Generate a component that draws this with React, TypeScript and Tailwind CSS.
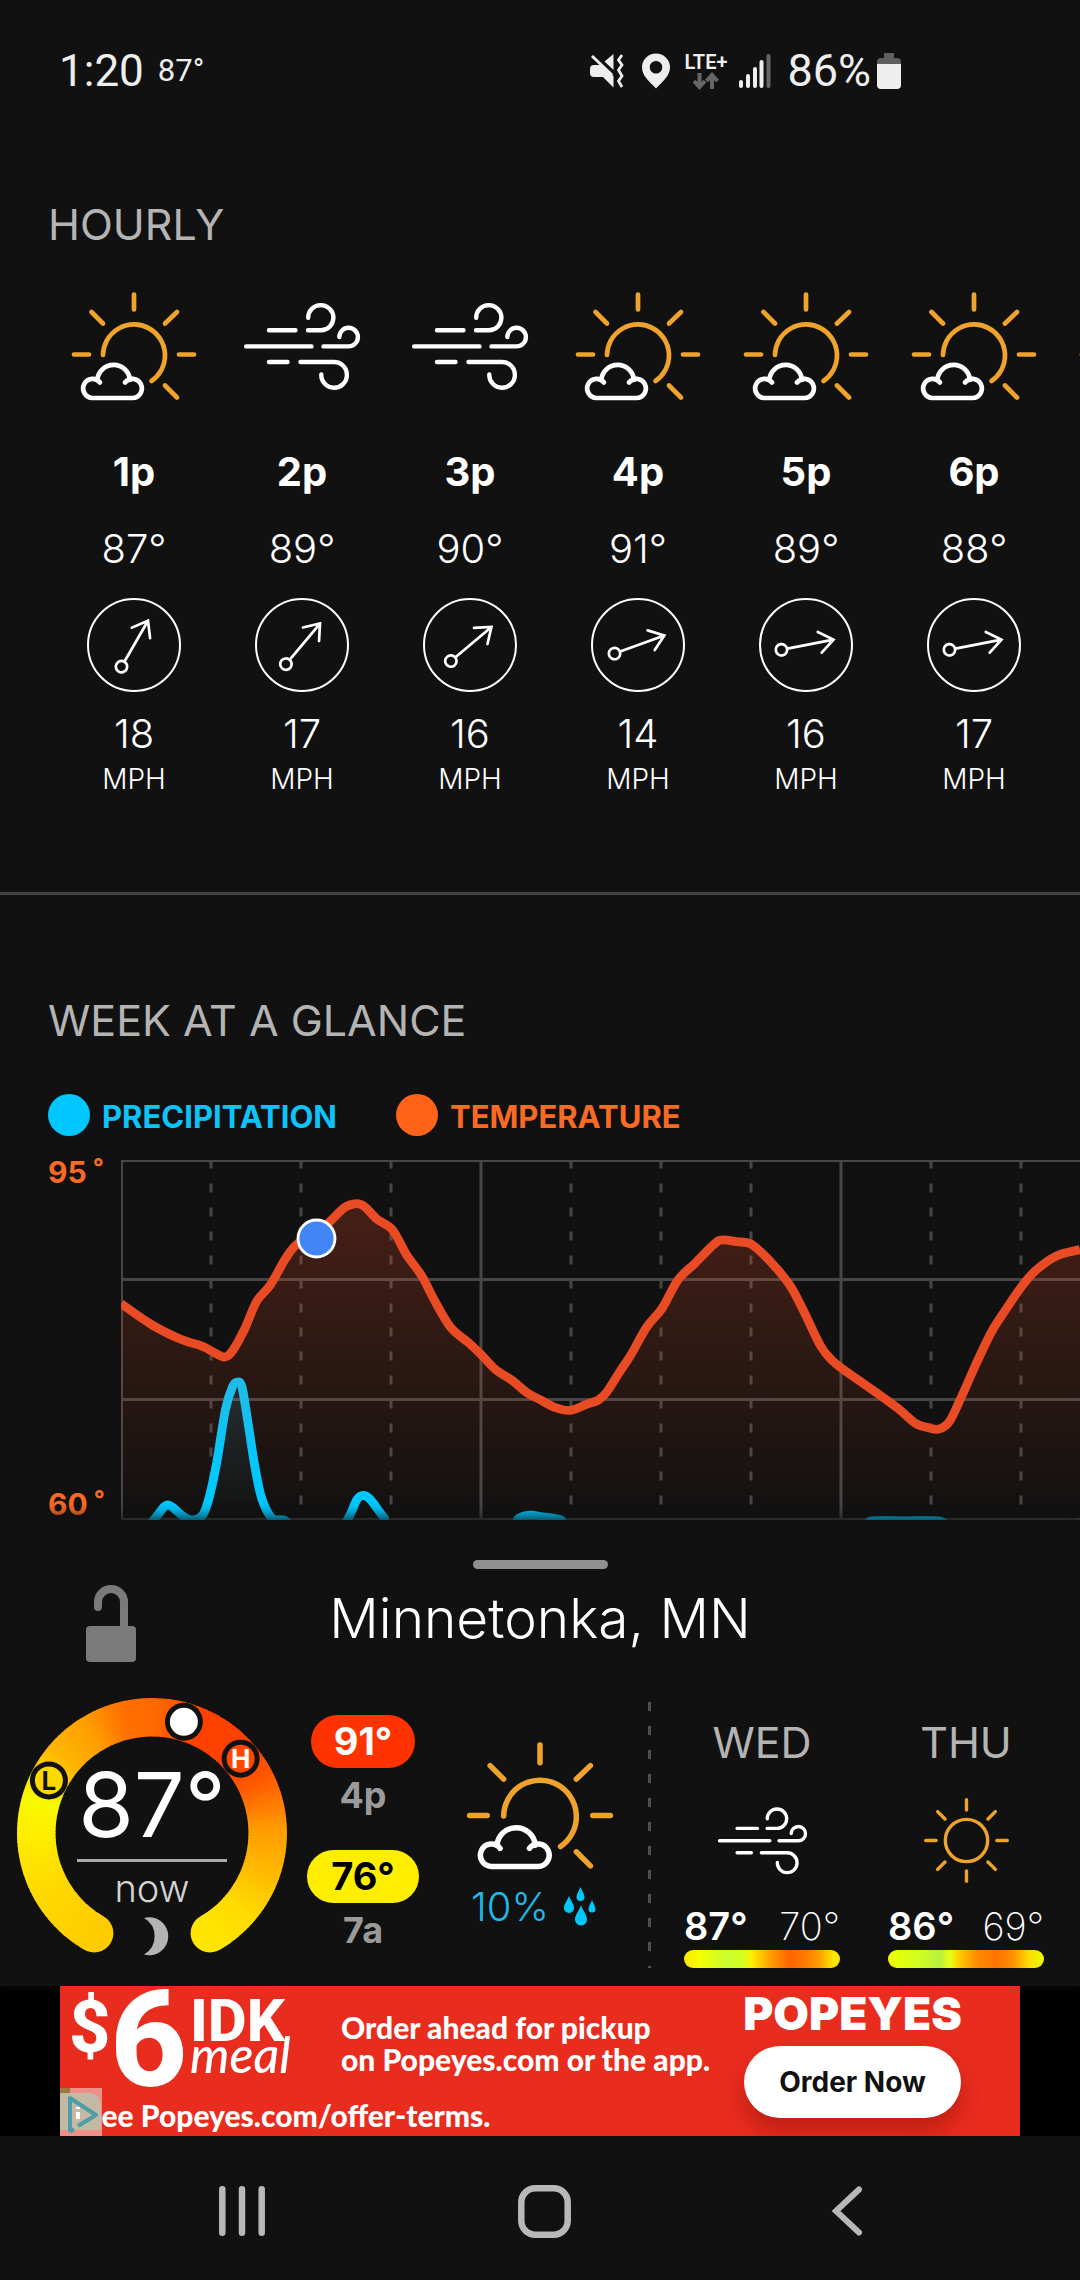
import { ReactNode } from "react";

type Point = [number, number];

interface Hour {
  icon: "sun" | "wind";
  label: string;
  temp: number;
  wind: number;
  angle: number;
}

const hours: Hour[] = [
  { icon: "sun", label: "1p", temp: 87, wind: 18, angle: 60 },
  { icon: "wind", label: "2p", temp: 89, wind: 17, angle: 50 },
  { icon: "wind", label: "3p", temp: 90, wind: 16, angle: 40 },
  { icon: "sun", label: "4p", temp: 91, wind: 14, angle: 20 },
  { icon: "sun", label: "5p", temp: 89, wind: 16, angle: 11 },
  { icon: "sun", label: "6p", temp: 88, wind: 17, angle: 11 },
];

const temperature: Point[] = [
  [0, 143.6], [30.5, 164.6], [59.8, 179.3], [80.4, 185.9], [89.7, 190.6], [102.8, 197],
  [111.4, 191], [123.5, 169.3], [135.5, 141.6], [149.3, 125], [164.8, 98.2], [175.8, 84.3],
  [195, 73.2], [207.9, 62.5], [223.4, 47.6], [235.4, 43.6], [244, 46.9], [256, 59.2],
  [271.6, 70], [285.3, 94.3], [300.8, 116], [312.9, 139.3], [329.4, 167], [347.3, 182.6],
  [359.7, 194.2], [374.9, 209.9], [390.4, 219.9], [405.9, 232.6], [419, 239.7], [434.5, 247.6],
  [449.3, 250.3], [465.5, 244.3], [477.5, 240], [486.1, 231.6], [498.2, 212.6], [510.3, 194.2],
  [525.7, 167], [541.2, 148.3], [556.7, 120.3], [574, 103.3], [592.9, 84.3], [601.5, 79.9],
  [615.3, 81.6], [629, 83.6], [639.4, 91.6], [654.9, 107.6], [670.4, 127.6], [684.2, 154.3],
  [699.6, 185.9], [710, 199.3], [722, 209.3], [749.6, 228.6], [777.1, 248.6], [794.3, 263.3],
  [808.1, 267.9], [818.5, 268.9], [828.8, 261], [840.8, 236], [854.6, 205], [870.1, 172.6],
  [883.9, 150.9], [901.1, 125.9], [914.9, 110.2], [935.5, 95.9], [959, 89.6],
];

const precipitation: Point[] = [
  [0, 370], [22, 370], [34.6, 357.6], [46.7, 345], [61.5, 355.8], [71.8, 360], [82.2, 354.3],
  [89, 334.2], [96, 300.9], [104.5, 249.3], [111.4, 227], [116.3, 222.2], [121, 227],
  [127, 262.6], [133.8, 306], [140.7, 338.4], [151, 358.2], [163, 360], [175, 366.5],
  [215, 372], [227.5, 357.6], [236, 339.4], [242.3, 335.3], [249.2, 339.3], [263, 357.6],
  [275, 370], [385, 370], [397, 358.7], [409.3, 355.2], [421, 356.8], [439.7, 359.7], [457, 366.5],
  [730, 367.4], [749.6, 361], [784, 361], [818.5, 361], [838, 367.4], [959, 370],
];

// catmull-rom through all the points
function smooth(points: Point[]) {
  let d = `M${points[0][0]} ${points[0][1]}`;
  for (let i = 0; i < points.length - 1; i++) {
    const p0 = points[i - 1] ?? points[i];
    const p1 = points[i];
    const p2 = points[i + 1];
    const p3 = points[i + 2] ?? p2;
    d += `C${p1[0] + (p2[0] - p0[0]) / 6} ${p1[1] + (p2[1] - p0[1]) / 6} ${p2[0] - (p3[0] - p1[0]) / 6} ${p2[1] - (p3[1] - p1[1]) / 6} ${p2[0]} ${p2[1]}`;
  }
  return d;
}

function PartlyCloudy({ className }: { className: string }) {
  return (
    <svg viewBox="0 0 126 110" fill="none" strokeLinecap="round" strokeLinejoin="round" strokeWidth="4.7" className={className}>
      <g stroke="#f0a32b">
        <path d="M63 3.500V18.500M3 63.500H18M108 63.500H123M20.500 21L32 32.500M106 21L94 32.500M94 94.500L106 106.500" />
        <path d="M32 64A31 31 0 1 1 80.500 90" />
      </g>
      <g stroke="#fff">
        <path d="M29 91.500A9.400 9.600 0 1 0 21.300 107H61.500A9.400 9.600 0 1 0 54 91.500" />
        <path d="M26.300 89A16.400 16.400 0 0 1 59 89" />
      </g>
    </svg>
  );
}

function Wind({ className }: { className: string }) {
  return (
    <svg viewBox="0 0 126 110" fill="none" stroke="#fff" strokeLinecap="round" strokeWidth="4.4" className={className}>
      <path d="M30 39.300H56.500M69 39.300H82A12.600 12.600 0 1 0 69.200 26.700" />
      <path d="M7.200 55.400H72.500M84.500 55.400H109.500A9.300 9.300 0 1 0 100.300 46" />
      <path d="M30 71H48.500M61.500 71H95A12.800 12.900 0 1 1 82.300 83.500" />
    </svg>
  );
}

function Sunny({ className }: { className: string }) {
  return (
    <svg viewBox="-63 -55 126 110" fill="none" stroke="#f0a32b" strokeLinecap="round" strokeWidth="4.4" className={className}>
      <circle r="27.500" />
      {[0, 45, 90, 135, 180, 225, 270, 315].map((a) => (
        <path key={a} d="M39.500 0H53" transform={`rotate(${a})`} />
      ))}
    </svg>
  );
}

function WindDirection({ angle }: { angle: number }) {
  return (
    <svg viewBox="-48 -48 96 96" fill="none" stroke="#fff" className="mt-6 h-24 w-24">
      <circle r="46" strokeWidth="2" />
      <g transform={`rotate(${-angle})`} strokeWidth="2.7" strokeLinecap="round">
        <circle cx="-25" r="5.700" />
        <path d="M-19 0H28M14 -10.500L28 0L14 10.500" />
      </g>
    </svg>
  );
}

function StatusBar() {
  return (
    <header className="flex h-[142px] items-center pl-[59px] pr-[179px] font-[Roboto,sans-serif] text-[#eee]">
      <span className="text-[44px]">1:20</span>
      <span className="ml-3.5 text-[31px]">87°</span>
      <div className="ml-auto flex items-center">
        {/* muted / vibrate */}
        <svg viewBox="0 0 34 36" className="h-9 w-[34px]">
          <path d="M0 16Q0 12 4 12H11L23.500 23V34.500L13 24H4Q0 24 0 20Z" fill="#eee" />
          <path d="M14.500 8.500L23.500 1V17Z" fill="#eee" />
          <path d="M2 3L22 22" stroke="#eee" strokeWidth="3" />
          <path d="M32 2L28.500 7L32 12L28.500 17L32 23L28.500 28L32 34" fill="none" stroke="#eee" strokeWidth="2.800" />
        </svg>
        <svg viewBox="0 0 28 36" className="ml-[18px] h-9 w-7">
          <path fillRule="evenodd" d="M14 0.500A14 14 0 0 0 0 14.500C0 23 8 29 14 35.500C20 29 28 23 28 14.500A14 14 0 0 0 14 0.500ZM14 8A6.300 6.300 0 1 1 14 20.600A6.300 6.300 0 0 1 14 8Z" fill="#eee" />
        </svg>
        <div className="ml-3.5 flex flex-col items-center">
          <span className="text-[20px] font-semibold leading-5">LTE+</span>
          <svg viewBox="0 0 26 18" className="h-[18px] w-[26px]" fill="none" stroke="#666" strokeWidth="4">
            <path d="M6.500 1V15M1 9L6.500 15L12 9M19 17V3M13.500 9L19 3L24.500 9" />
          </svg>
        </div>
        <svg viewBox="0 0 32 36" className="ml-3 h-9 w-8" strokeLinecap="round" strokeWidth="4">
          <path d="M2 29V33M9 23V33M16 16V33M22.500 9V33" stroke="#eee" />
          <path d="M29.500 3V33" stroke="#666" />
        </svg>
        <span className="ml-4 text-[45px]">86%</span>
        <svg viewBox="0 0 24 36" className="ml-1.5 h-9 w-6">
          <path d="M7 0H17V5H20Q24 5 24 9V12H0V9Q0 5 4 5H7Z" fill="#5e5e5e" />
          <path d="M0 11H24V32Q24 36 20 36H4Q0 36 0 32Z" fill="#eee" />
        </svg>
      </div>
    </header>
  );
}

function SectionTitle({ children }: { children: ReactNode }) {
  return <h2 className="pl-12 text-[43px] leading-[48px] text-[#b4b4b4]">{children}</h2>;
}

function Hourly() {
  return (
    <section className="border-b-[3px] border-[#424242] pt-[58px] pb-[97px]">
      <SectionTitle>HOURLY</SectionTitle>
      <div className="mt-[43px] flex overflow-hidden pl-[50px]">
        {hours.map((hour) => (
          <div key={hour.label} className="flex w-[168px] shrink-0 flex-col items-center text-[40px] leading-[48px]">
            {hour.icon === "sun" ? (
              <PartlyCloudy className="h-[110px] w-[126px]" />
            ) : (
              <Wind className="h-[110px] w-[126px]" />
            )}
            <span className="mt-[47px] font-bold">{hour.label}</span>
            <span className="mt-[29px] font-light">{hour.temp}°</span>
            <WindDirection angle={hour.angle} />
            <span className="mt-[17px] font-light">{hour.wind}</span>
            <span className="mt-[5px] text-[28px] font-light leading-8">MPH</span>
          </div>
        ))}
        {/* edge of the next hour, still off screen */}
        <div className="flex w-[168px] shrink-0 justify-center">
          <PartlyCloudy className="h-[110px] w-[126px]" />
        </div>
      </div>
    </section>
  );
}

function AxisLabel({ value }: { value: number }) {
  return (
    <span className="flex text-[30px] font-bold leading-6">
      {value}
      <span className="ml-1.5 -mt-1 text-[24px] leading-6">°</span>
    </span>
  );
}

function WeekChart() {
  const line = smooth(temperature);
  const rain = smooth(precipitation);
  return (
    <svg viewBox="0 0 959 360" className="min-w-0 flex-1">
      <defs>
        <linearGradient id="heat" x1="0" y1="0" x2="0" y2="360" gradientUnits="userSpaceOnUse">
          <stop offset="0" stopColor="#e94b24" stopOpacity="0.28" />
          <stop offset="1" stopColor="#e94b24" stopOpacity="0" />
        </linearGradient>
        <linearGradient id="rain" x1="0" y1="222" x2="0" y2="360" gradientUnits="userSpaceOnUse">
          <stop offset="0" stopColor="#20bce8" />
          <stop offset="0.7" stopColor="#00c8ff" />
        </linearGradient>
        <linearGradient id="rainfill" x1="0" y1="222" x2="0" y2="360" gradientUnits="userSpaceOnUse">
          <stop offset="0" stopColor="#20bce8" stopOpacity="0.14" />
          <stop offset="1" stopColor="#20bce8" stopOpacity="0" />
        </linearGradient>
      </defs>
      <g stroke="#464646" fill="none">
        <path d="M959 1H1V359H959" strokeWidth="2" />
        <path d="M0 119.500H959M0 239.500H959M360 0V360M720 0V360" strokeWidth="3" />
        {[90, 180, 270, 450, 540, 630, 810, 900].map((x) => (
          <path key={x} d={`M${x} 0V348`} strokeWidth="3" strokeDasharray="9 15" strokeDashoffset="0.500" />
        ))}
      </g>
      <path d={`${line}V360H0Z`} fill="url(#heat)" />
      <path d={line} fill="none" stroke="#e94b24" strokeWidth="8.800" />
      <path d={`${rain}V400H0Z`} fill="url(#rainfill)" />
      <path d={rain} fill="none" stroke="url(#rain)" strokeWidth="8.800" />
      <circle cx="195.500" cy="78.500" r="18.500" fill="#4285f4" stroke="#fff" strokeWidth="2.800" />
    </svg>
  );
}

function Week() {
  return (
    <section className="pt-[101px]">
      <SectionTitle>WEEK AT A GLANCE</SectionTitle>
      <div className="mt-[50px] flex items-center pl-12 text-[31px] font-bold">
        <span className="h-[42px] w-[42px] rounded-full bg-[#00c8ff]" />
        <span className="ml-3 pt-1 leading-8 text-[#0fc3f8]">PRECIPITATION</span>
        <span className="ml-[59px] h-[42px] w-[42px] rounded-full bg-[#ff6319]" />
        <span className="ml-3 pt-1 leading-8 text-[#f96a24]">TEMPERATURE</span>
      </div>
      <div className="mt-6 flex pl-12">
        <div className="flex w-[73px] shrink-0 flex-col justify-between pb-1 text-[#f96a24]">
          <AxisLabel value={95} />
          <AxisLabel value={60} />
        </div>
        <WeekChart />
      </div>
    </section>
  );
}

const dial: [number, number, number, number][] = [
  [0, 255, 204, 0],
  [30, 255, 216, 0],
  [60, 255, 238, 0],
  [76, 246, 250, 0],
  [90, 255, 208, 0],
  [100, 255, 182, 0],
  [120, 255, 156, 0],
  [136, 255, 112, 0],
  [152, 255, 104, 0],
  [172, 255, 64, 0],
  [196, 255, 66, 0],
  [214, 255, 88, 0],
  [238, 255, 156, 0],
  [258, 255, 184, 0],
  [280, 255, 218, 0],
  [300, 255, 230, 0],
];

function dialColor(t: number) {
  const i = Math.max(1, dial.findIndex((stop) => stop[0] >= t));
  const [a, b] = [dial[i - 1], dial[i]];
  const k = (t - a[0]) / (b[0] - a[0]);
  const mix = (n: number) => Math.round(a[n] + (b[n] - a[n]) * k);
  return `rgb(${mix(1)},${mix(2)},${mix(3)})`;
}

// t runs clockwise from the lower left end of the dial, in degrees
function dialPoint(t: number): Point {
  const a = ((t + 120) * Math.PI) / 180;
  return [115.7 * Math.cos(a), 115.7 * Math.sin(a)];
}

function Marker({ t, letter, color }: { t: number; letter?: string; color?: string }) {
  const [x, y] = dialPoint(t);
  return (
    <g transform={`translate(${x} ${y})`}>
      <circle r="19" fill="#111" />
      <circle r="14" fill={letter ? dialColor(t) : "#fff"} />
      {letter && (
        <text y="9.500" textAnchor="middle" fontSize="26" fontWeight="700" fill={color}>
          {letter}
        </text>
      )}
    </g>
  );
}

function Gauge() {
  const steps = Array.from({ length: 150 }, (_, i) => i * 2);
  const [x0, y0] = dialPoint(0);
  const [x1, y1] = dialPoint(300);
  return (
    <div className="grid h-[270px] w-[270px] shrink-0">
      <svg viewBox="-135 -135 270 270" className="col-start-1 row-start-1">
        <circle cx={x0} cy={y0} r="19.250" fill={dialColor(0)} />
        <circle cx={x1} cy={y1} r="19.250" fill={dialColor(300)} />
        {steps.map((t) => {
          const [ax, ay] = dialPoint(t);
          const [bx, by] = dialPoint(Math.min(300, t + 2.4));
          return (
            <path key={t} d={`M${ax} ${ay}A115.7 115.7 0 0 1 ${bx} ${by}`} fill="none" stroke={dialColor(t + 1)} strokeWidth="38.500" />
          );
        })}
        <Marker t={87} letter="L" color="#111" />
        <Marker t={166} />
        <Marker t={200} letter="H" color="#fff" />
      </svg>
      <div className="col-start-1 row-start-1 flex flex-col items-center pt-[75px]">
        <span className="text-[90px] leading-[64px]">87°</span>
        <span className="mt-[22px] h-[3px] w-[150px] bg-[#aaa]" />
        <span className="mt-2.5 text-[38px] font-light leading-8 text-[#d4d4d4]">now</span>
        <svg viewBox="0 0 38 39" className="mt-[13px] h-[39px] w-[38px]">
          <path d="M11 1A19 19 0 1 1 11 37.500A21 21 0 0 0 11 1Z" fill="#b4b4b4" />
        </svg>
      </div>
    </div>
  );
}

function Drops() {
  return (
    <svg viewBox="0 0 34 40" fill="#00c8ff" className="h-10 w-[34px]">
      <path d="M6 9C8 14 11 17 11 21A5 5 0 0 1 1 21C1 17 4 14 6 9Z" />
      <path d="M17.500 0C19 4 21.500 7 21.500 10A4 4 0 0 1 13.500 10C13.500 7 16 4 17.500 0Z" />
      <path d="M29 13C30.500 17 32.500 19 32.500 22A3.500 3.500 0 0 1 25.500 22C25.500 19 27.500 17 29 13Z" />
      <path d="M18 18C20 24 24 28 24 32.500A6 6 0 0 1 12 32.500C12 28 16 24 18 18Z" />
    </svg>
  );
}

function Day({ name, high, low, icon, bar }: { name: string; high: number; low: number; icon: ReactNode; bar: string }) {
  return (
    <div className="flex w-[156px] flex-col items-center pt-6">
      <span className="text-[43px] leading-10 text-[#b4b4b4]">{name}</span>
      {icon}
      <div className="mt-[27px] flex w-full justify-between text-[38px] leading-8">
        <span className="font-semibold">{high}°</span>
        <span className="font-extralight">{low}°</span>
      </div>
      <span className={`mt-2 h-[18px] w-full rounded-full ${bar}`} />
    </div>
  );
}

function Current() {
  return (
    <section className="relative bg-[#111] pt-10 pb-[18px] shadow-[0_-2px_12px_2px_rgba(17,17,17,0.8)]">
      <div className="mx-auto h-[9px] w-[135px] rounded-full bg-[#8f8f8f]" />
      <div className="mt-[15px] grid grid-cols-[1fr_auto_1fr]">
        <button type="button" aria-label="Lock location" className="ml-[86px] h-[78px] w-[50px]">
          <svg viewBox="0 0 50 78" fill="#7a7a7a">
            <path d="M12 23V18A13 13 0 0 1 38 18V46" fill="none" stroke="#7a7a7a" strokeWidth="8" strokeLinecap="round" />
            <rect y="42" width="50" height="36" rx="4" />
          </svg>
        </button>
        <h1 className="pt-1 text-[55px] font-light leading-[60px]">Minnetonka, MN</h1>
      </div>
      <div className="mt-9 flex pl-[17px] pr-9">
        <Gauge />
        <div className="flex w-[152px] shrink-0 flex-col items-center pt-[17px] font-bold">
          <span className="w-[104px] rounded-full bg-[#ff3300] text-center text-[38px] leading-[53px]">91°</span>
          <span className="mt-[11px] text-[36px] leading-8 text-[#9a9a9a]">4p</span>
          <span className="mt-[39px] w-[112px] rounded-full bg-[#ffee00] text-center text-[38px] leading-[53px] text-black">76°</span>
          <span className="mt-[11px] text-[36px] leading-8 text-[#9a9a9a]">7a</span>
        </div>
        <div className="flex w-[202px] shrink-0 flex-col items-center pt-[43px]">
          <PartlyCloudy className="h-[129px] w-[148px]" />
          <div className="mt-[17px] flex items-center gap-3.5 pr-3 text-[40px] font-light leading-10 text-[#1cbbea]">
            10%
            <Drops />
          </div>
        </div>
        <svg viewBox="0 0 3 270" className="ml-[7px] h-[270px] w-[3px] shrink-0">
          <path d="M1.500 4V270" stroke="#505050" strokeWidth="3" strokeDasharray="9 15" />
        </svg>
        <div className="flex flex-1 justify-end gap-12">
          <Day
            name="WED"
            high={87}
            low={70}
            icon={<Wind className="mt-9 h-[85px] w-[97px]" />}
            bar="bg-[linear-gradient(90deg,#ffe800,#f4ff00_10%,#c8ff30_27%,#d8ff20_38%,#fff000_43%,#ff9a00_56%,#ff6400_68%,#ff8000_80%,#ffa000_87%,#ffe800_96%)]"
          />
          <Day
            name="THU"
            high={86}
            low={69}
            icon={<Sunny className="mt-9 h-[85px] w-[97px]" />}
            bar="bg-[linear-gradient(90deg,#f0ff00,#d0ff20_20%,#b8f040_33%,#e8ff10_40%,#ffc800_46%,#ff8800_58%,#ff7400_70%,#ff9000_80%,#ffd800_90%,#e8ff00)]"
          />
        </div>
      </div>
    </section>
  );
}

function Ad() {
  return (
    <aside className="bg-black px-[60px] font-[Lato,sans-serif]">
      <div className="relative flex h-[150px] justify-between bg-[#e82c1e] pl-[9px] pr-[59px]">
        <div>
          <div className="flex h-[102px] font-[Roboto,sans-serif] font-extrabold">
            <span className="w-[41px] pt-2 text-[72px] leading-[68px]">$</span>
            <span className="w-[80px] text-[134px] leading-[110px]">6</span>
            <div className="w-[122px] pt-3">
              <p className="text-[60px] leading-[46px]">IDK</p>
              <p className="-mt-1.5 font-[Lato,sans-serif] text-[50px] font-medium italic leading-8">meal</p>
            </div>
            <p className="ml-[29px] pt-[25px] font-[Lato,sans-serif] text-[30px] font-black leading-8">
              Order ahead for pickup
              <br />
              on Popeyes.com or the app.
            </p>
          </div>
          <p className="pl-4 text-[30px] font-black leading-[54px]">See Popeyes.com/offer-terms.</p>
        </div>
        <div className="flex w-[217px] flex-col items-center pt-[3px]">
          <span className="font-[Inter,sans-serif] text-[46px] font-black leading-[48px]">POPEYES</span>
          <a href="#order" className="mt-[9px] w-full rounded-full bg-white text-center font-[Inter,sans-serif] text-[28px] font-bold leading-[72px] text-[#111] shadow-[0_14px_20px_rgba(120,10,0,0.35)]">
            Order Now
          </a>
        </div>
        <button type="button" aria-label="Ad choices" className="absolute bottom-0 left-0 h-12 w-[42px] bg-[#f09a92]/90">
          <svg viewBox="0 0 42 48" fill="none" strokeLinejoin="round">
            <path d="M0 0H10V5H0Z" fill="#9c7a3c" />
            <path d="M0 5H32Q41 8 41 18V42H0Z" fill="#c4b9a4" />
            <path d="M10 44V10L36 27L18 38M10 44L14 41" stroke="#4f9da8" strokeWidth="4" />
            <path d="M18 24V31M18 19V21" stroke="#fff" strokeWidth="4" />
          </svg>
        </button>
      </div>
    </aside>
  );
}

function NavBar() {
  return (
    <nav className="relative grid h-36 grid-cols-3 items-center bg-[#111] pl-[91px] pr-[82px] pt-1.5">
      <button type="button" aria-label="Recent apps" className="mx-auto">
        <svg viewBox="0 0 46 50" className="h-[50px] w-[46px]" stroke="#b8b8b8" strokeWidth="6.500" strokeLinecap="round">
          <path d="M3.300 3.300V46.700M23 3.300V46.700M42.700 3.300V46.700" />
        </svg>
      </button>
      <button type="button" aria-label="Home" className="mx-auto">
        <svg viewBox="0 0 53 53" className="h-[53px] w-[53px]" fill="none" stroke="#b8b8b8" strokeWidth="6.500">
          <rect x="3.300" y="3.300" width="46.400" height="46.400" rx="14" />
        </svg>
      </button>
      <button type="button" aria-label="Back" className="mx-auto">
        <svg viewBox="0 0 32 50" className="h-[50px] w-8" fill="none" stroke="#b8b8b8" strokeWidth="6" strokeLinecap="round">
          <path d="M28 3.500L5 25L28 46.500" />
        </svg>
      </button>
    </nav>
  );
}

export default function App() {
  return (
    <div className="min-h-screen overflow-hidden bg-[#111] font-[Inter,sans-serif] text-white">
      <StatusBar />
      <main>
        <Hourly />
        <Week />
        <Current />
      </main>
      <Ad />
      <NavBar />
    </div>
  );
}
